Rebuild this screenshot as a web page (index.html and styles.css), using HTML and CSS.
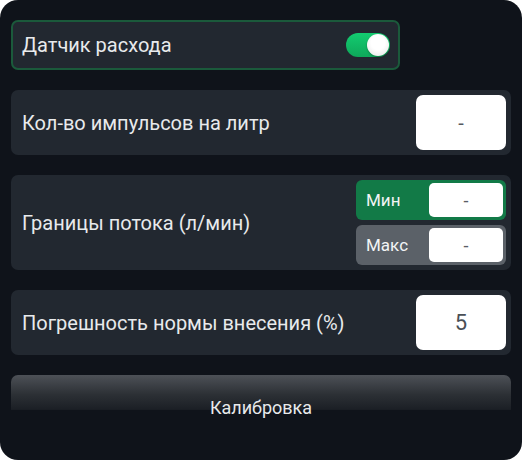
FILE: index.html
```html
<!DOCTYPE html>
<html lang="ru">
<head>
<meta charset="utf-8">
<link rel="stylesheet" href="styles.css">
</head>
<body>
<div class="panel">
  <div class="card card-toggle">
    <span class="label">Датчик расхода</span>
    <span class="switch"><span class="knob"></span></span>
  </div>
  <div class="card row">
    <span class="label">Кол-во импульсов на литр</span>
    <div class="input">-</div>
  </div>
  <div class="card row row-tall">
    <span class="label">Границы потока (л/мин)</span>
    <div class="pair">
      <div class="mini mini-min"><span class="mini-label">Мин</span><div class="mini-input">-</div></div>
      <div class="mini mini-max"><span class="mini-label">Макс</span><div class="mini-input">-</div></div>
    </div>
  </div>
  <div class="card row">
    <span class="label">Погрешность нормы внесения (%)</span>
    <div class="input input-num">5</div>
  </div>
  <div class="button">Калибровка</div>
</div>
</body>
</html>
```
FILE: styles.css
```css
* { box-sizing: border-box; }
html, body { margin: 0; padding: 0; background: #ffffff; }
body { width: 522px; height: 460px; font-family: Roboto, "Noto Sans", sans-serif; }
.panel {
  width: 522px;
  height: 460px;
  background: #0f131a;
  border-radius: 18px;
  padding: 20px 11px 0 11px;
  display: flex;
  flex-direction: column;
  gap: 20px;
}
.card {
  background: #222830;
  border-radius: 7px;
  display: flex;
  align-items: center;
  justify-content: space-between;
}
.label { color: #e8eaec; font-size: 20px; }
.card-toggle {
  width: 389px;
  height: 50px;
  border: 2px solid #1b5a3b;
  padding: 0 8px 0 9px;
}
.switch {
  position: relative;
  width: 44px;
  height: 24px;
  border-radius: 12px;
  background: linear-gradient(180deg, #13cc70, #0ea85a);
}
.knob {
  position: absolute;
  right: 1px;
  top: 1px;
  width: 22px;
  height: 22px;
  border-radius: 50%;
  background: radial-gradient(circle at 50% 40%, #ffffff 40%, #e4e4e4 100%);
  box-shadow: 0 1px 2px rgba(0,0,0,0.3);
}
.row { height: 65px; padding: 5px 5px 5px 11px; }
.row-tall { height: 95px; }
.input {
  width: 90px;
  height: 55px;
  background: #ffffff;
  border-radius: 7px;
  display: flex;
  align-items: center;
  justify-content: center;
  color: #55595f;
  font-size: 20px;
}
.input-num { font-size: 22px; color: #4a4f56; }
.pair { display: flex; flex-direction: column; gap: 5px; }
.mini {
  width: 150px;
  height: 40px;
  border-radius: 6px;
  padding: 3px;
  display: flex;
  align-items: center;
  justify-content: space-between;
}
.mini-min { background: #127a47; }
.mini-max { background: #5b6168; }
.mini-label { color: #f2f4f5; font-size: 17px; padding-left: 7px; }
.mini-input {
  width: 74px;
  height: 34px;
  background: #ffffff;
  border-radius: 5px;
  display: flex;
  align-items: center;
  justify-content: center;
  color: #5a5e64;
  font-size: 18px;
}
.button {
  height: 65px;
  border-radius: 7px 7px 0 0;
  background: linear-gradient(180deg, #4d5157 0%, #2c3035 30%, #1b1f25 53%, #0f131a 54%);
  color: #e8eaec;
  font-size: 18px;
  display: flex;
  align-items: center;
  justify-content: center;
}
```
